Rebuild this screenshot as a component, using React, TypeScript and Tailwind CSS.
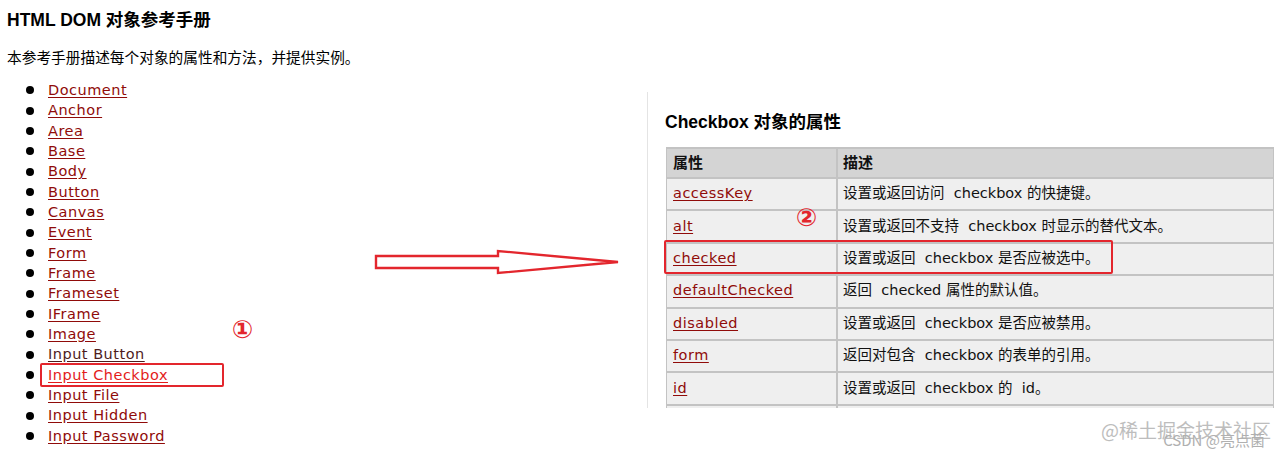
import React from 'react';

const FONT = { fontFamily: '"DejaVu Sans", "Noto Sans CJK SC", sans-serif' };
const HEAD_FONT = { fontFamily: '"Liberation Sans", "Noto Sans CJK SC", sans-serif' };
const CJK = { fontFamily: '"Noto Sans CJK SC", sans-serif' };

const objects = [
  'Document', 'Anchor', 'Area', 'Base', 'Body', 'Button', 'Canvas', 'Event', 'Form',
  'Frame', 'Frameset', 'IFrame', 'Image', 'Input Button', 'Input Checkbox', 'Input File',
  'Input Hidden', 'Input Password',
];

const props: [string, string][] = [
  ['accessKey', '设置或返回访问  checkbox 的快捷键。'],
  ['alt', '设置或返回不支持  checkbox 时显示的替代文本。'],
  ['checked', '设置或返回  checkbox 是否应被选中。'],
  ['defaultChecked', '返回  checked 属性的默认值。'],
  ['disabled', '设置或返回  checkbox 是否应被禁用。'],
  ['form', '返回对包含  checkbox 的表单的引用。'],
  ['id', '设置或返回  checkbox 的  id。'],
  ['', ''],
];

const linkColor = (name: string) => {
  if (name === 'Input Checkbox') return 'text-[#e31b1b]';
  if (name === 'Input Button') return 'text-[#4e1c1c]';
  return 'text-[#900b09]';
};

const ObjectList: React.FC = () => (
  <ul className="mt-[13px]">
    {objects.map((name) => (
      <li key={name} className="flex items-center h-[20.35px]">
        <span className="w-[8px] h-[8px] rounded-full bg-black ml-[19px] mr-[14px] shrink-0" />
        <a className={`underline underline-offset-[2px] text-[14.5px] tracking-[0.5px] leading-none ${linkColor(name)}`}>
          {name}
        </a>
      </li>
    ))}
  </ul>
);

const PropTable: React.FC = () => (
  <div className="ml-px w-[608px] border-x border-[#c3c3c3] text-[14.5px] text-[#111]">
    <div className="grid grid-cols-[169px_1fr] h-[30px] bg-[#d4d4d4] border-t-2 border-[#c3c3c3] font-bold text-[15px]">
      <div className="flex items-center pl-[6px]" style={HEAD_FONT}>属性</div>
      <div className="flex items-center pl-[5px] border-l-2 border-[#c3c3c3]" style={HEAD_FONT}>描述</div>
    </div>
    {props.map(([name, desc], i) => (
      <div key={i} className="grid grid-cols-[169px_1fr] h-[32.4px] bg-[#efefef] border-t-2 border-[#c3c3c3]">
        <div className="flex items-center pl-[6px]">
          <a className="underline underline-offset-[2px] tracking-[0.5px] text-[#900b09]">{name}</a>
        </div>
        <div className="flex items-center pl-[5px] border-l-2 border-[#c3c3c3] whitespace-pre">{desc}</div>
      </div>
    ))}
  </div>
);

export default function App() {
  return (
    <div className="relative w-[1287px] h-[454px] overflow-hidden bg-white text-black" style={FONT}>
      <div className="flex items-start">
        <section className="w-[647px] shrink-0 pl-[7px] pt-[8px]">
          <h1 className="text-[17.5px] leading-[24px] font-bold" style={HEAD_FONT}>HTML DOM 对象参考手册</h1>
          <p className="mt-[15px] text-[14.7px] leading-[20px]" style={CJK}>
            本参考手册描述每个对象的属性和方法，并提供实例。
          </p>
          <ObjectList />
        </section>

        <section className="mt-[92px] h-[316px] flex-1 overflow-hidden border-l border-[#e4e4e4] pl-[17px] pt-[18px]">
          <h2 className="text-[17.5px] leading-[24px] font-bold mb-[13px]" style={HEAD_FONT}>Checkbox 对象的属性</h2>
          <PropTable />
        </section>
      </div>

      {/* annotations */}
      <div className="absolute left-[40px] top-[363px] w-[184px] h-[24px] border-2 border-[#e3262d] rounded-[2px]" />
      <div className="absolute left-[664px] top-[240px] w-[449px] h-[34px] border-2 border-[#e3262d] rounded-[2px]" />
      <span className="absolute left-[232px] top-[316px] text-[25px] leading-[28px] font-bold text-[#e3262d]">①</span>
      <span className="absolute left-[796px] top-[204px] text-[25px] leading-[28px] font-bold text-[#e3262d]">②</span>

      <svg className="absolute left-[374px] top-[248px]" width="250" height="28" viewBox="0 0 250 28">
        <path
          d="M2 8 L124 8 L124 3 L244 14 L124 25 L124 20 L2 20 Z"
          fill="none"
          stroke="#e3262d"
          strokeWidth="2.4"
          strokeLinejoin="miter"
        />
      </svg>

      <div className="absolute right-[16px] top-[418px] text-[19px] leading-[24px] text-[#bdbdbd]" style={CJK}>
        @稀土掘金技术社区
      </div>
      <div className="absolute right-[22px] top-[430px] text-[15px] leading-[20px] text-[#b0b0b0]" style={CJK}>
        CSDN @亮点菌
      </div>
    </div>
  );
}
